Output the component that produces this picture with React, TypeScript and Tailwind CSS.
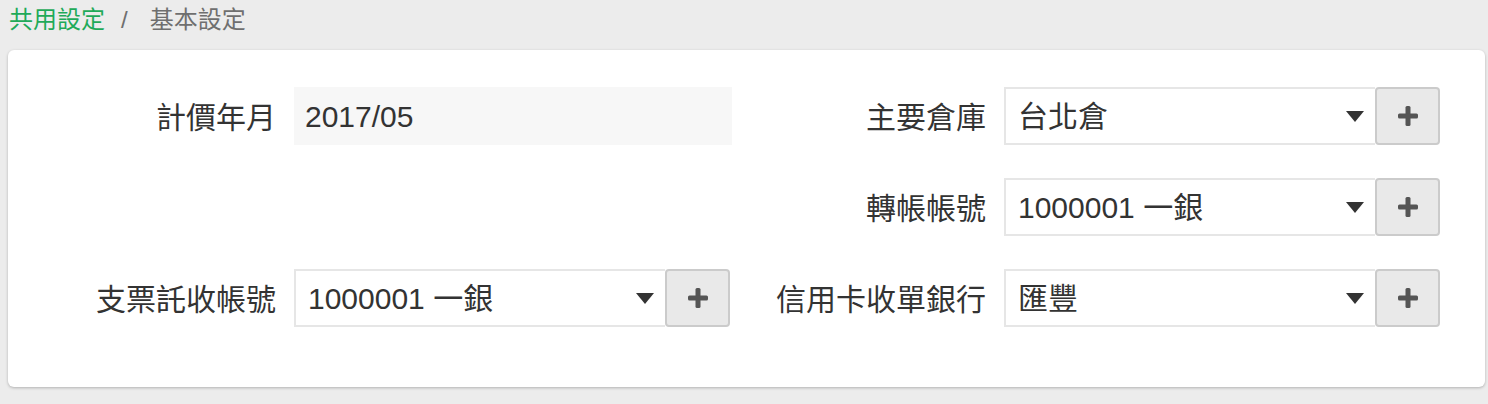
import React from "react";

const FONT = '"Liberation Sans", "Noto Sans CJK TC", sans-serif';

function Caret() {
  return (
    <svg width="20" height="13" viewBox="0 0 20 13" className="shrink-0">
      <polygon points="1,1 19,1 10,12" fill="#333" />
    </svg>
  );
}

function Plus() {
  return (
    <svg width="22" height="22" viewBox="0 0 22 22">
      <rect x="8.5" y="1" width="5" height="20" rx="1.5" fill="#555" />
      <rect x="1" y="8.5" width="20" height="5" rx="1.5" fill="#555" />
    </svg>
  );
}

function SelectField({ value }: { value: string }) {
  return (
    <div className="flex w-[436px] h-[58px]">
      <div className="flex-1 flex items-center border-2 border-[#e6e6e6] border-r-0 bg-white pl-[12px] pr-[10px]">
        <span className="flex-1 text-[30px] text-[#333] leading-none whitespace-nowrap pt-[2px]">{value}</span>
        <Caret />
      </div>
      <button className="w-[65px] h-[58px] flex items-center justify-center bg-[#e9e9e9] border-2 border-[#cbcbcb] rounded-[4px]">
        <Plus />
      </button>
    </div>
  );
}

function Row({ label, children }: { label?: string; children?: React.ReactNode }) {
  return (
    <div className="flex items-center h-[58px]">
      <div className="w-[270px] pr-[18px] pt-[3px] text-right text-[30px] text-[#333] leading-none whitespace-nowrap">
        {label}
      </div>
      {children}
    </div>
  );
}

export default function App() {
  return (
    <div className="min-h-[404px] bg-[#ececec]" style={{ fontFamily: FONT }}>
      <div className="h-[50px] pl-[9px] pt-[7px] text-[24px] leading-[26px] flex items-start">
        <span className="text-[#1faa59]">共用設定</span>
        <span className="text-[#6f6f6f] pl-[16px] pr-[22px]">/</span>
        <span className="text-[#6f6f6f]">基本設定</span>
      </div>
      <div className="ml-[8px] w-[1477px] bg-white rounded-[6px] shadow-[0_1px_3px_rgba(0,0,0,0.25)] pl-[16px] pt-[37px] pb-[60px]">
        <div className="grid grid-cols-[710px_710px] gap-y-[33px]">
          <Row label="計價年月">
            <div className="w-[438px] h-[58px] bg-[#f7f7f7] flex items-center pl-[11px] pt-[2px] text-[30px] text-[#333] leading-none">
              2017/05
            </div>
          </Row>
          <Row label="主要倉庫">
            <SelectField value="台北倉" />
          </Row>
          <Row />
          <Row label="轉帳帳號">
            <SelectField value="1000001 一銀" />
          </Row>
          <Row label="支票託收帳號">
            <SelectField value="1000001 一銀" />
          </Row>
          <Row label="信用卡收單銀行">
            <SelectField value="匯豐" />
          </Row>
        </div>
      </div>
    </div>
  );
}
